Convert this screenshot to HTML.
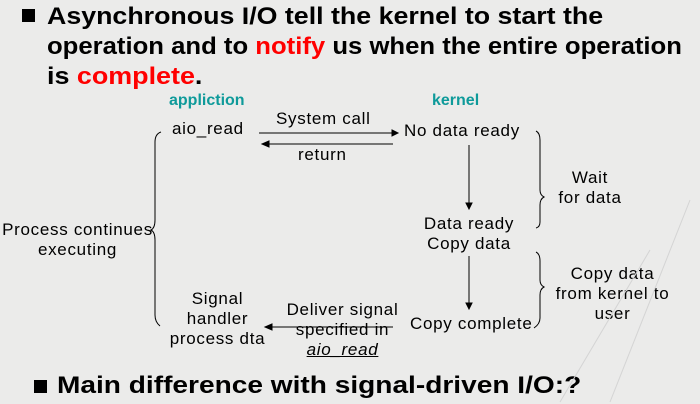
<!DOCTYPE html>
<html><head><style>
body{margin:0;width:700px;height:404px;background:#ebebea;position:relative;overflow:hidden;font-family:"Liberation Sans",sans-serif;}
.t{position:absolute;white-space:nowrap;}
.h{font-size:24px;font-weight:bold;color:#000;left:47px;line-height:30px;transform-origin:0 50%;}
.r{color:#f00;}
.d{font-size:17px;letter-spacing:0.7px;color:#000;text-align:center;line-height:20px;}
.c{color:#0e9a9a;font-weight:bold;font-size:16px;}
</style></head><body>
<div class="t" style="left:22px;top:9px;width:13px;height:13px;background:#000"></div>
<div class="t h" style="top:2px;transform:scaleX(1.115)">Asynchronous I/O tell the kernel to start the</div>
<div class="t h" style="top:32px;transform:scaleX(1.07)">operation and to <span class="r">notify</span> us when the entire operation</div>
<div class="t h" style="top:62px;transform:scaleX(1.12)">is <span class="r">complete</span>.</div>

<div class="t c" style="left:169px;top:92px">appliction</div>
<div class="t c" style="left:432px;top:92px">kernel</div>

<div class="t d" style="left:172px;top:119px">aio_read</div>
<div class="t d" style="left:276px;top:109px">System call</div>
<div class="t d" style="left:298px;top:145px">return</div>
<div class="t d" style="left:404px;top:121px">No data ready</div>
<div class="t d" style="left:0px;top:220px;width:155px">Process continues<br>executing</div>
<div class="t d" style="left:540px;top:168px;width:100px">Wait<br>for data</div>
<div class="t d" style="left:410px;top:214px;width:118px">Data ready<br>Copy data</div>
<div class="t d" style="left:545px;top:264px;width:135px">Copy data<br>from kernel to<br>user</div>
<div class="t d" style="left:155px;top:289px;width:125px">Signal<br>handler<br>process dta</div>
<div class="t d" style="left:280px;top:300px;width:125px">Deliver signal<br>specified in<br><i><u>aio_read</u></i></div>
<div class="t d" style="left:410px;top:314px">Copy complete</div>

<div class="t" style="left:34px;top:380px;width:13px;height:13px;background:#000"></div>
<div class="t h" style="left:57px;top:371px;transform:scaleX(1.17)">Main difference with signal-driven I/O:?</div>

<svg class="t" style="left:0;top:0" width="700" height="404" fill="none" stroke="#000" stroke-width="1">
<path d="M259 133H397"/><path d="M392 130L398 133L392 136Z" fill="#000"/>
<path d="M393 144H264"/><path d="M269 141L262 144L269 147Z" fill="#000"/>
<path d="M469 145V205"/><path d="M466 203L469 209L472 203Z" fill="#000"/>
<path d="M469 256V305"/><path d="M466 303L469 309L472 303Z" fill="#000"/>
<path d="M393 327H267"/><path d="M272 324L265 327L272 330Z" fill="#000"/>
<path d="M161 132Q155 134 155 142V220Q155 228 151 230Q155 232 155 240V315Q155 322 160 326"/>
<path d="M536 131Q540 133 540 140V190Q540 195 544 197Q540 199 540 205V222Q540 227 536 228"/>
<path d="M536 252Q540 254 540 261V280Q540 285 544 287Q540 289 540 295V318Q540 324 534 328"/>
<path d="M560 402L650 250" stroke="#d4d4d4"/><path d="M610 402L690 200" stroke="#d4d4d4"/>
</svg>
</body></html>
